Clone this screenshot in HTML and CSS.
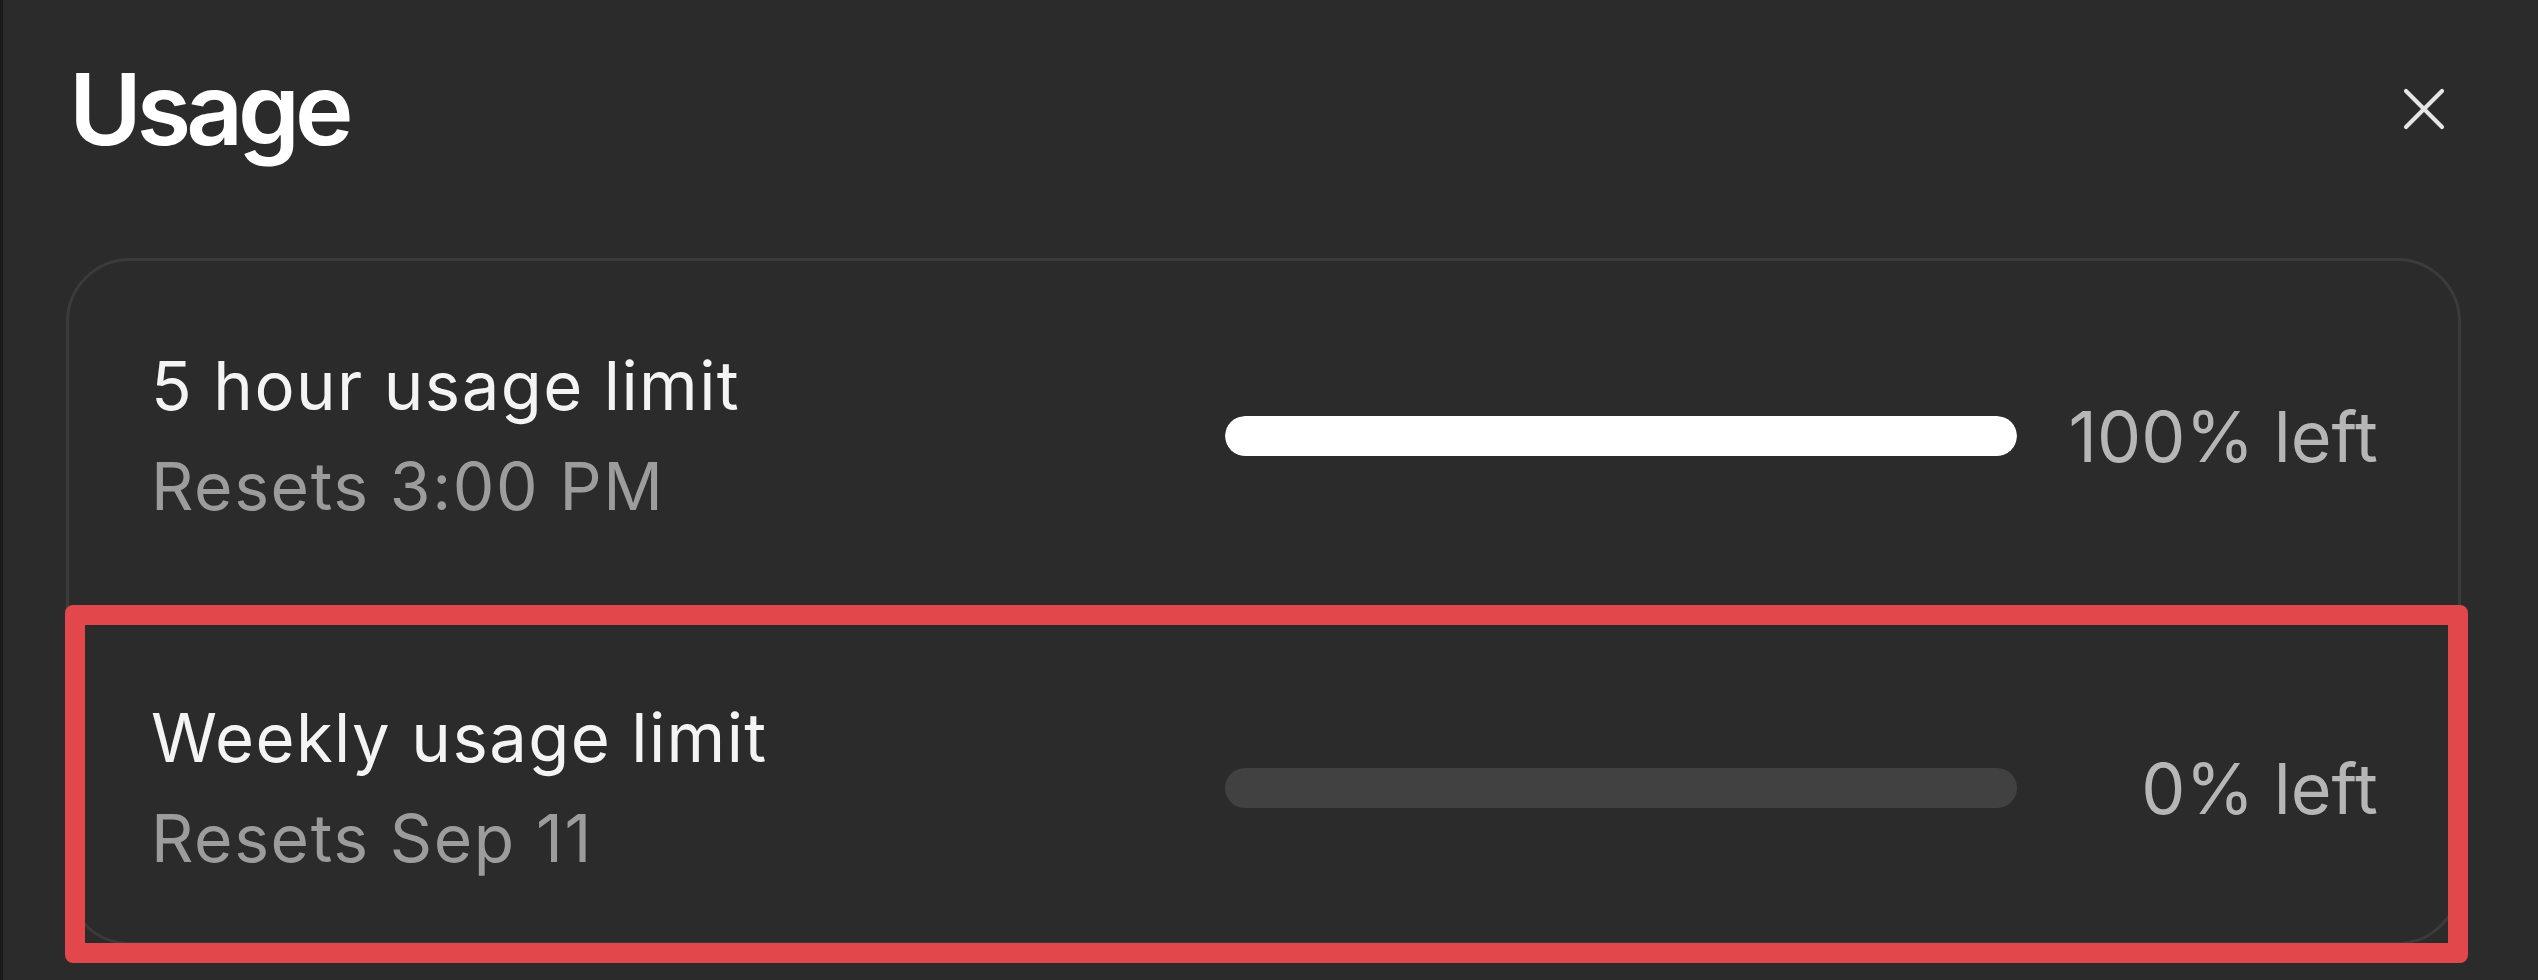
FILE: index.html
```html
<!DOCTYPE html>
<html lang="en">
<head>
<meta charset="utf-8">
<title>Usage</title>
<link rel="stylesheet" href="styles.css">
</head>
<body>
<div class="panel">
  <header class="header">
    <h1 class="title">Usage</h1>
    <button class="close" aria-label="Close">
      <svg viewBox="0 0 42 42" width="42" height="42"><path d="M3 3 L39 39 M39 3 L3 39" stroke="#e6e6e6" stroke-width="4.2" stroke-linecap="round" fill="none"/></svg>
    </button>
  </header>
  <section class="card">
    <div class="row">
      <div class="info">
        <div class="label">5 hour usage limit</div>
        <div class="sub">Resets 3:00 PM</div>
      </div>
      <div class="bar"><div class="fill" style="width:100%"></div></div>
      <div class="pct">100% left</div>
    </div>
    <div class="row row-marked">
      <div class="info">
        <div class="label">Weekly usage limit</div>
        <div class="sub">Resets Sep 11</div>
      </div>
      <div class="bar"><div class="fill" style="width:0%"></div></div>
      <div class="pct">0% left</div>
    </div>
  </section>
</div>
</body>
</html>
```

FILE: styles.css
```css
html, body {
  margin: 0;
  padding: 0;
  height: 100%;
}
body {
  background: #2b2b2b;
  font-family: "Inter", "Liberation Sans", sans-serif;
  color: #f4f4f4;
  border-left: 3px solid #1b1b1b;
  box-sizing: border-box;
  overflow: hidden;
}
.panel {
  padding: 0 77px 0 63px;
}
.header {
  height: 218px;
  display: flex;
  align-items: center;
  justify-content: space-between;
}
.title {
  margin: 0;
  font-size: 99px;
  font-weight: 600;
  letter-spacing: -5px;
  line-height: 1;
  padding-left: 3px;
  color: #ffffff;
}
.close {
  background: none;
  border: 0;
  padding: 0;
  margin-right: 16px;
  width: 42px;
  height: 42px;
  display: flex;
}
.card {
  margin-top: 40px;
  border: 3px solid #3b3b3b;
  border-radius: 64px;
  background: #2b2b2b;
}
.row {
  display: flex;
  align-items: center;
  padding: 75px 80px 75px 82px;
}
.row-marked {
  position: relative;
  padding-top: 77px;
  padding-bottom: 54px;
}
.row-marked::after {
  content: "";
  position: absolute;
  top: -6px;
  left: -4px;
  right: -10px;
  bottom: -21px;
  border: 20px solid #e2474b;
  border-radius: 8px;
  pointer-events: none;
}
.info {
  flex: 1;
}
.label {
  font-size: 67px;
  line-height: 100px;
  letter-spacing: 1.4px;
  color: #f4f4f4;
}
.sub {
  font-size: 66px;
  line-height: 100px;
  letter-spacing: 1.6px;
  color: #9c9c9c;
}
.bar {
  width: 792px;
  height: 40px;
  border-radius: 20px;
  background: #414141;
  overflow: hidden;
}
.fill {
  height: 100%;
  background: #ffffff;
  border-radius: 20px;
}
.pct {
  width: 361px;
  text-align: right;
  font-size: 70px;
  color: #b6b6b6;
}
```
